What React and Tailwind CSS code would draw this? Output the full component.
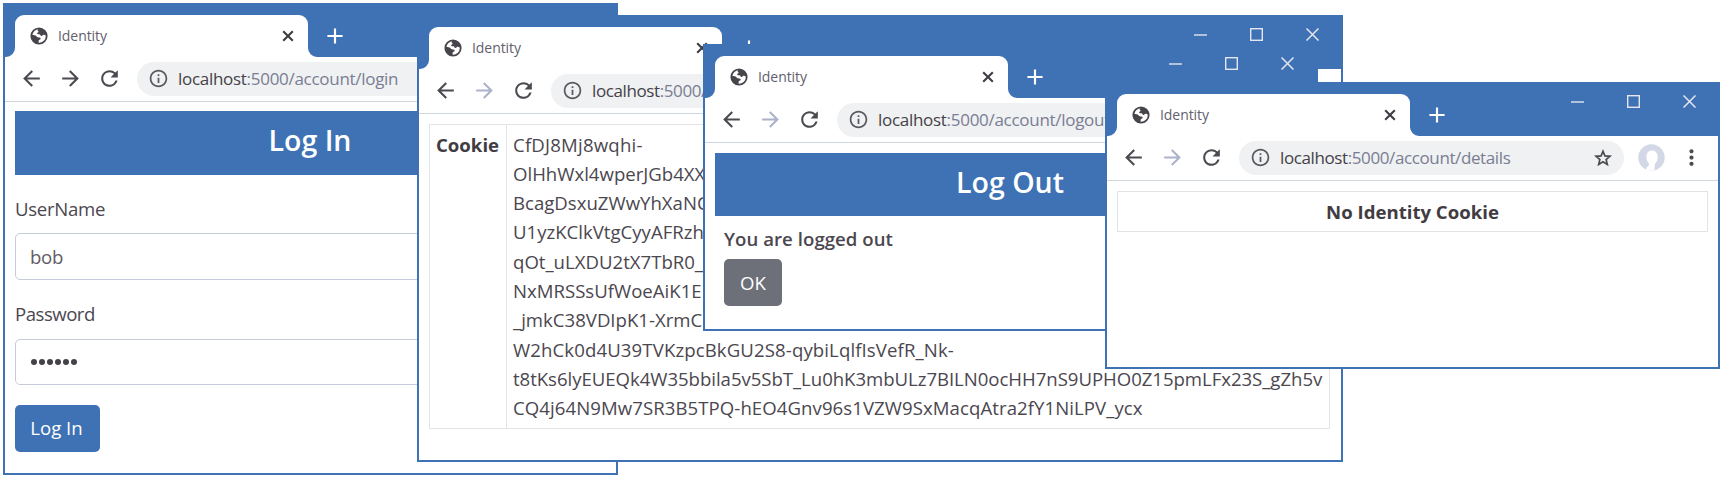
import React from 'react';
import { MdAdd, MdArrowBack, MdArrowForward, MdInfoOutline, MdMoreVert, MdRefresh } from 'react-icons/md';

function Globe() {
  return (
    <svg viewBox="0 0 18 18" className="size-[18px] shrink-0 text-[#48444b]" fill="currentColor">
      <circle cx="9" cy="9" r="7.7" fill="none" stroke="currentColor" strokeWidth="1.8" />
      <path d="M9.6 1.2c-1 .9-1.900 1.200-2 2.100-.1 1 .9.8 1 1.500 0 .8-1.600.7-1.500 1.700.1.9 1.600.6 2.400.8 1 .2.9 1.600 1.900 1.700 1.100.1 1-1.100 2-1.200 1-.1 1.900.9 3.400.5A8 8 0 0 0 9.600 1.200Z" />
      <path d="M1.200 8.100c1.500.2 3-.1 4.400.4 1.200.5 1 1.500 2.200 1.800 1.300.3 2.800.1 2.900 1.300.1 1.100-1.600 1-2 2-.3.8.2 1.700-.4 2.900C4.200 16.300 1 12.700 1.200 8.100Z" />
    </svg>
  );
}

function Flare({ className }) {
  return (
    <svg viewBox="0 0 9 9" className={`absolute bottom-0 size-[9px] ${className}`} fill="#fff">
      <path d="M9 0A9 9 0 0 1 0 9H9Z" />
    </svg>
  );
}

function TabClose() {
  return (
    <svg viewBox="0 0 18 18" className="ml-auto size-[18px] shrink-0 text-[#403c42]" fill="none" stroke="currentColor" strokeWidth="2.1">
      <path d="M4.200 4.200l9.600 9.600M13.800 4.200l-9.600 9.600" />
    </svg>
  );
}

function Star() {
  return (
    <svg viewBox="0 0 20 20" className="ml-auto size-[20px] shrink-0" fill="none" stroke="currentColor" strokeWidth="1.700">
      <path d="M10 3.300l1.900 4.600 5 .4-3.800 3.200 1.200 4.900L10 13.800l-4.300 2.600 1.200-4.900-3.800-3.200 5-.4Z" />
    </svg>
  );
}

function Avatar() {
  return (
    <svg viewBox="0 0 27 27" className="size-[27px] shrink-0">
      <circle cx="13.500" cy="13.500" r="13.200" fill="#d3d8e6" />
      <path d="M14 6.500c-3.600 0-5.600 2.700-5.600 6.200 0 3 1 5.300 2.600 6.900.2 1.800-.8 3-2.400 3.900l-.6 3h8.400l.3-4.200c-.1-1.200.1-2 .6-2.800 1.600-1.600 2.400-3.900 2.400-6.800 0-3.500-2.100-6.200-5.700-6.200Z" fill="#fff" />
    </svg>
  );
}

function WindowControls() {
  return (
    <div className="mt-[11px] mr-[22px] ml-auto flex gap-[43px] self-start">
      <svg viewBox="0 0 13 13" className="size-[13px]" stroke="#e6e6ef" strokeWidth="1.400" fill="none">
        <path d="M0 7H13" />
      </svg>
      <svg viewBox="0 0 13 13" className="size-[13px]" stroke="#e6e6ef" strokeWidth="1.400" fill="none">
        <rect x=".7" y=".7" width="11.600" height="11.600" />
      </svg>
      <svg viewBox="0 0 13 13" className="size-[13px]" stroke="#e6e6ef" strokeWidth="1.500" fill="none">
        <path d="M.5.5l12 12M12.500.5l-12 12" />
      </svg>
    </div>
  );
}

function BrowserWindow({ className, path, pathTracking = 'tracking-[-0.390px]', canForward, children }) {
  return (
    <section className={`absolute flex flex-col overflow-hidden border-2 border-[#3e72b4] bg-white ${className}`}>
      <header className="flex h-[52px] shrink-0 items-end bg-[#3e72b4] pl-[10px]">
        <div className="relative flex h-[42px] w-[293px] shrink-0 items-center rounded-t-[9px] bg-white pr-[11px] pl-[15px]">
          <Flare className="-left-[9px]" />
          <Globe />
          <span className="ml-[10px] text-[14px] leading-[20px] tracking-[-0.060px] text-[#62606e]">Identity</span>
          <TabClose />
          <Flare className="-right-[9px] -scale-x-100" />
        </div>
        <MdAdd className="mb-[8px] ml-[14px] size-[26px] shrink-0 text-white" />
        <WindowControls />
      </header>
      <nav className="flex h-[45px] shrink-0 items-center gap-[14px] border-b border-[#cfd6dc] pr-[14px] pb-px pl-[14px] text-[#4d4950]">
        <MdArrowBack className="size-[25px] shrink-0" />
        <MdArrowForward className={`size-[25px] shrink-0 ${canForward ? '' : 'text-[#abb2ca]'}`} />
        <MdRefresh className="size-[25px] shrink-0" />
        <div className="ml-px flex h-[34px] min-w-0 flex-1 items-center rounded-full bg-[#eff1f2] pr-[11px] pl-[11px]">
          <MdInfoOutline className="size-[21px] shrink-0 text-[#5c5961]" />
          <span className={`ml-[9px] text-[17px] leading-[24px] whitespace-nowrap text-[#7a7d92] ${pathTracking}`}>
            <span className="text-[#454148]">localhost</span>:5000/account/{path}
          </span>
          <Star />
        </div>
        <Avatar />
        <MdMoreVert className="size-[25px] shrink-0" />
      </nav>
      <main className="flex flex-col items-stretch px-[10px] pt-[10px]">{children}</main>
    </section>
  );
}

function Banner({ className = 'h-[63px] pb-[5px]', children }) {
  return (
    <h1 className={`flex items-center justify-center bg-[#3e72b4] pr-px text-[28.500px] leading-[36px] font-semibold text-white ${className}`}>
      {children}
    </h1>
  );
}

const cookieLines = [
  ['CfDJ8Mj8wqhi-', 'tracking-[0.2px]'],
  ['OlHhWxl4wperJGb4XX', ''],
  ['BcagDsxuZWwYhXaNC', ''],
  ['U1yzKClkVtgCyyAFRzh', ''],
  ['qOt_uLXDU2tX7TbR0_', ''],
  ['NxMRSSsUfWoeAiK1E', ''],
  ['_jmkC38VDIpK1-XrmC', ''],
  ['W2hCk0d4U39TVKzpcBkGU2S8-qybiLqlfIsVefR_Nk-', 'tracking-[0.110px]'],
  ['t8tKs6lyEUEQk4W35bbila5v5SbT_Lu0hK3mbULz7BILN0ocHH7nS9UPHO0Z15pmLFx23S_gZh5v', 'tracking-[-0.040px]'],
  ['CQ4j64N9Mw7SR3B5TPQ-hEO4Gnv96s1VZW9SxMacqAtra2fY1NiLPV_ycx', 'tracking-[0.070px]'],
];

export default function App() {
  return (
    <div className="relative h-[479px] w-[1724px] overflow-hidden bg-white font-['Open_Sans','Noto_Sans',sans-serif] text-[18.6px] leading-[29.330px] text-[#4b474f]">
      <BrowserWindow className="top-[3px] left-[3px] h-[472px] w-[615px]" path="login" pathTracking="tracking-[-0.290px]" canForward>
        <Banner className="-mt-px h-[64px] pb-[7px]">Log In</Banner>
        <label className="mt-[19px] tracking-[-0.3px]">UserName</label>
        <div className="mt-[10px] flex h-[47px] items-center rounded-[5px] border border-[#c5cbda] px-[14px] tracking-[-0.3px] text-[#5f5c66]">bob</div>
        <label className="mt-[19px] tracking-[-0.5px]">Password</label>
        <div className="mt-[10px] flex h-[46px] items-center gap-[2px] rounded-[5px] border border-[#c5cbda] px-[15px]">
          {[0, 1, 2, 3, 4, 5].map((i) => (
            <span key={i} className="size-[6px] rounded-full bg-[#454148]" />
          ))}
        </div>
        <button className="mt-[20px] h-[47px] w-[85px] self-start rounded-[5px] bg-[#3e72b4] pr-[2px] text-white">Log In</button>
      </BrowserWindow>

      <BrowserWindow className="top-[15px] left-[417px] h-[447px] w-[926px]" path="details">
        <div className="mr-px flex border border-[#e2e5e8]">
          <div className="w-[77px] shrink-0 border-r border-[#e2e5e8] px-[6px] py-[5px] font-bold text-[#413c41]">Cookie</div>
          <div className="px-[6px] pt-[4.500px] pb-[5.500px] whitespace-nowrap">
            {cookieLines.map(([text, tracking]) => (
              <div key={text} className={tracking}>{text}</div>
            ))}
          </div>
        </div>
      </BrowserWindow>

      <BrowserWindow className="top-[44px] left-[703px] h-[287px] w-[615px]" path="logout" pathTracking="tracking-[-0.290px]">
        <Banner>Log Out</Banner>
        <div className="flex flex-col items-start px-[9px] pt-[8px]">
          <p className="font-semibold tracking-[0.050px]">You are logged out</p>
          <button className="mt-[6px] h-[47px] w-[58px] rounded-[5px] bg-[#6d6f79] text-white">OK</button>
        </div>
      </BrowserWindow>

      <BrowserWindow className="top-[82px] left-[1105px] h-[287px] w-[615px]" path="details">
        <div className="border border-[#e0e4e6] py-[5px] text-center font-bold text-[#413c41]">No Identity Cookie</div>
      </BrowserWindow>
    </div>
  );
}
